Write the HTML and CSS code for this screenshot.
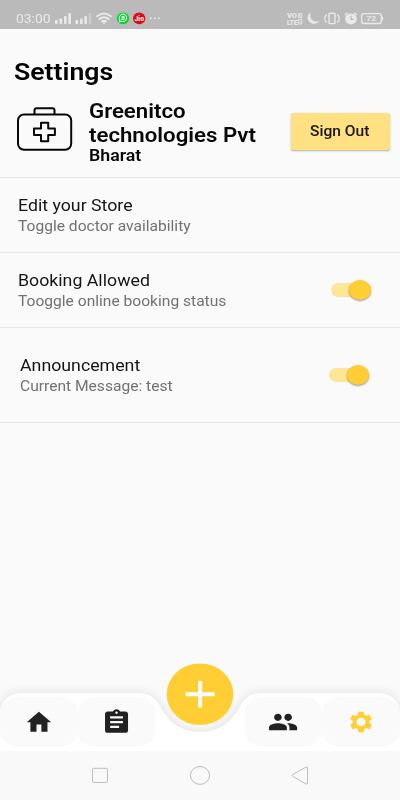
FILE: index.html
```html
<!DOCTYPE html>
<html lang="en">
<head>
<meta charset="utf-8">
<title>Settings</title>
<link rel="stylesheet" href="styles.css">
</head>
<body>
<div class="screen">
  <header class="status">
    <span class="clock wide">03:00</span>
    <svg class="status-left" width="110" height="16" viewBox="54 10 110 16" fill="#e9e9e9">
      <rect x="55" y="20" width="2.6" height="4" rx=".8"/><rect x="59.5" y="18.500" width="2.600" height="5.500" rx=".8"/><rect x="64" y="16" width="2.600" height="8" rx=".8"/><rect x="68.300" y="13" width="2.600" height="11" rx=".8"/>
      <rect x="75.500" y="20" width="2.600" height="4" rx=".8"/><rect x="80" y="18.500" width="2.600" height="5.500" rx=".8"/><rect x="84.300" y="16" width="2.600" height="8" rx=".8"/><rect x="88.700" y="13" width="2.600" height="11" rx=".8" opacity=".4"/>
      <g fill="none" stroke="#e9e9e9" stroke-width="1.900"><path d="M96.300 16.800q7.700-6.500 15.400 0M98.800 19.500q5.200-4.300 10.400 0M101.300 21.900q2.700-2.300 5.400 0"/></g><path d="M102.300 22.300h3.400L104 24.300z"/>
      <ellipse cx="123" cy="18.400" rx="6.200" ry="5.900" fill="#08d62f"/>
      <path d="M119.400 21.600l.5-1.700a3.700 3.700 0 1 1 1.500 1.300z" fill="none" stroke="#fff" stroke-width="1"/>
      <text x="121.300" y="20.300" font-size="5.500" font-weight="700" fill="#fff">B</text>
      <ellipse cx="139.200" cy="18.400" rx="6.200" ry="5.900" fill="#e00b12"/>
      <text x="134.500" y="20.700" font-size="6.500" font-weight="700" fill="#fff" textLength="9.500" lengthAdjust="spacingAndGlyphs">Jio</text>
      <rect x="150" y="17.500" width="1.700" height="1.500"/><rect x="154" y="17.500" width="1.700" height="1.500"/><rect x="158" y="17.500" width="1.700" height="1.500"/>
    </svg>
    <svg class="status-right" width="98" height="16" viewBox="286 10 98 16" fill="#e9e9e9">
      <text x="287" y="17.900" font-size="6.400" font-weight="900" textLength="10" lengthAdjust="spacingAndGlyphs">VO</text>
      <text x="287" y="24.600" font-size="6.400" font-weight="900" textLength="10.500" lengthAdjust="spacingAndGlyphs">LTE</text>
      <path d="M298 13h4.300v5.200H298zM298 19h4.300v5.600H298z" opacity=".8"/>
      <path d="M299.500 14.300h1v2.800M299.200 20.300h2v1.200h-2v1.500h2" fill="none" stroke="#bbb" stroke-width=".7"/>
      <path d="M310.500 12.500a6.300 6.200 0 1 0 8.700 8.600c-6 2-10.500-3-8.700-8.600z"/>
      <g fill="none" stroke="#e9e9e9" stroke-width="1.400"><rect x="329" y="13.300" width="6" height="10.300" rx=".8"/><path d="M326.700 14.500q-4 4 0 8M337.300 14.500q4 4 0 8"/></g>
      <ellipse cx="351" cy="18.900" rx="5.900" ry="5.500"/><path d="M345 15l3-2.300M357 15l-3-2.300" stroke="#e9e9e9" stroke-width="1.400"/><path d="M351 15.800v3.600h2.600" fill="none" stroke="#aaa"/>
      <rect x="361.600" y="13.600" width="19.800" height="9.900" rx="2.500" fill="none" stroke="#e9e9e9" stroke-width="1.400"/><path d="M382 16.700h1.200v3.600H382z"/>
      <text x="366.300" y="21.400" font-size="8" font-weight="700" textLength="10" lengthAdjust="spacingAndGlyphs">72</text>
    </svg>
  </header>
  <main class="content">
    <h1 class="heading"><span class="wide">Settings</span></h1>
    <section class="profile">
      <svg class="kit" width="58" height="46" viewBox="16 106 58 46" fill="none" stroke="#070707" stroke-width="2" stroke-linejoin="round">
        <rect x="18" y="114.500" width="53.200" height="35.300" rx="6"/><path d="M34.500 114v-3.700q0-2 2.200-2h15.600q2.200 0 2.200 2v3.700"/>
        <path d="M41 122.700h7.200v5.700h6.700v6.600h-6.700v6.300H41V135h-7v-6.600h7z"/>
      </svg>
      <div class="who"><span class="name wide">Greenitco</span><span class="name wide">technologies Pvt</span><span class="person wide">Bharat</span></div>
      <button class="signout"><span class="wide">Sign Out</span></button>
    </section>
    <section class="row">
      <div class="copy"><span class="title wide">Edit your Store</span><span class="sub wide">Toggle doctor availability</span></div>
    </section>
    <section class="row">
      <div class="copy"><span class="title wide">Booking Allowed</span><span class="sub wide">Tooggle online booking status</span></div>
      <div class="switch"><i class="thumb"></i></div>
    </section>
    <section class="row tall">
      <div class="copy"><span class="title wide">Announcement</span><span class="sub wide">Current Message: test</span></div>
      <div class="switch"><i class="thumb"></i></div>
    </section>
  </main>
  <nav class="tabs">
    <svg class="tabs-art" width="400" height="111" viewBox="0 640 400 111">
      <defs><filter id="shade" x="-10%" y="-50%" width="120%" height="200%"><feGaussianBlur stdDeviation="6"/></filter></defs>
      <path d="M0 710Q4 693 22 693H138C149 693 155 697 160 706C169 723 182 732 200 732S231 723 240 706C245 697 251 693 262 693H378Q396 693 400 710V752H0z" fill="#000" opacity=".11" filter="url(#shade)"/>
      <path d="M0 710Q4 693 22 693H138C149 693 155 697 160 706C169 723 182 732 200 732S231 723 240 706C245 697 251 693 262 693H378Q396 693 400 710V752H0z" fill="#fff"/>
      <g fill="#fafafa"><rect y="697.300" width="78" height="49.300" rx="18" ry="16"/><rect x="77.500" y="697.300" width="78" height="49.300" rx="18" ry="16"/><rect x="244.500" y="697.300" width="78" height="49.300" rx="18" ry="16"/><rect x="322" y="697.300" width="78" height="49.300" rx="18" ry="16"/></g>
      <ellipse cx="200" cy="694.300" rx="33.400" ry="30.800" fill="#ffce34"/>
      <path d="M185.700 694.200h29M200.200 681v26.400" stroke="#fff" stroke-width="4"/>
      <g fill="#212121">
        <path transform="translate(24.300 708.100) scale(1.220 1.180)" d="M10 20v-6h4v6h5v-8h3L12 3 2 12h3v8z"/>
        <path transform="translate(101.200 708) scale(1.278 1.180)" d="M19 3h-4.180C14.400 1.840 13.300 1 12 1c-1.300 0-2.400.84-2.820 2H5c-1.100 0-2 .9-2 2v14c0 1.100.9 2 2 2h14c1.100 0 2-.9 2-2V5c0-1.100-.9-2-2-2zm-7 0c.55 0 1 .45 1 1s-.45 1-1 1-1-.45-1-1 .45-1 1-1zm2 14H7v-2h7v2zm3-4H7v-2h10v2zm0-4H7V7h10v2z"/>
        <path transform="translate(267.700 707.900) scale(1.278 1.180)" d="M16 11c1.660 0 2.990-1.340 2.990-3S17.660 5 16 5c-1.660 0-3 1.340-3 3s1.340 3 3 3zm-8 0c1.660 0 2.990-1.340 2.990-3S9.660 5 8 5C6.340 5 5 6.340 5 8s1.340 3 3 3zm0 2c-2.330 0-7 1.170-7 3.500V19h14v-2.500c0-2.330-4.670-3.500-7-3.500zm8 0c-.29 0-.62.02-.97.05 1.160.84 1.970 1.970 1.970 3.450V19h6v-2.500c0-2.330-4.670-3.500-7-3.500z"/>
      </g>
      <path fill="#ffce34" transform="translate(347.700 709.700) scale(1.111 1.026)" d="M19.430 12.980c.04-.32.070-.64.070-.98s-.03-.66-.07-.98l2.110-1.650c.19-.15.24-.42.12-.64l-2-3.460c-.12-.22-.39-.3-.61-.22l-2.490 1c-.52-.4-1.080-.73-1.690-.98l-.38-2.650C14.460 2.180 14.250 2 14 2h-4c-.25 0-.46.18-.49.42l-.38 2.650c-.61.25-1.170.59-1.690.98l-2.490-1c-.23-.09-.49 0-.61.22l-2 3.460c-.13.22-.07.49.12.64l2.110 1.650c-.04.32-.07.65-.07.980s.03.66.07.98l-2.110 1.650c-.19.15-.24.42-.12.64l2 3.460c.12.22.39.3.61.22l2.490-1c.52.4 1.080.73 1.690.98l.38 2.650c.03.24.24.42.49.42h4c.25 0 .46-.18.49-.42l.38-2.650c.61-.25 1.170-.59 1.690-.98l2.490 1c.23.09.49 0 .61-.22l2-3.460c.12-.22.07-.49-.12-.64l-2.110-1.650zM12 16.100c-2.260 0-4.100-1.840-4.100-4.100s1.840-4.100 4.100-4.100 4.100 1.840 4.100 4.100-1.840 4.100-4.100 4.100z"/>
    </svg>
  </nav>
  <footer class="system">
    <svg width="220" height="20" viewBox="90 765 220 20" fill="none" stroke="#bdbdbd" stroke-width="1">
      <rect x="92.500" y="768.300" width="15" height="14.200" rx="1.300"/><ellipse cx="200" cy="775.400" rx="9.600" ry="8.900"/><path d="M306 767q1.500-.5 1.500 1v15q0 1.500-1.500 1l-13.500-7.800q-1-.8 0-1.600z"/>
    </svg>
  </footer>
</div>
</body>
</html>
```
FILE: styles.css
```css
* { box-sizing: border-box; }
body { margin: 0; font-family: Roboto, sans-serif; color: #070707; background: #fafafa; }
.screen { width: 400px; height: 800px; display: flex; flex-direction: column; overflow: hidden; background: #fafafa; }
.wide { display: block; width: max-content; white-space: nowrap; transform: scaleX(1.083); transform-origin: left center; }
.status { height: 29px; flex: none; background: #bababa; display: flex; align-items: flex-start; padding: 10px 16px 0; }
.status-left { margin-left: 7px; }
.status-right { margin-left: auto; }
.clock { width: 31px; font-size: 12.800px; line-height: 18px; color: #e9e9e9; }
.content { flex: 1; min-height: 0; }
.heading { margin: 0; padding: 27px 0 0 13.500px; font-size: 24.600px; line-height: 31px; font-weight: 600; color: #000; }
.profile { height: 91px; display: flex; align-items: flex-start; padding: 13px 10px 0 16px; border-bottom: 1px solid #e6e6e6; }
.kit { margin-top: 6px; flex: none; }
.who { margin-left: 15px; font-weight: 600; }
.name { font-size: 20.500px; line-height: 23.500px; }
.person { font-size: 16.400px; line-height: 18px; }
.signout { width: 99px; height: 37px; margin: 13px 0 0 auto; padding: 0 0 0 19px; flex: none; border: 0; border-radius: 2px; background: #ffe082; box-shadow: 0 1px 2px rgba(0,0,0,.3); color: #151515; font: 500 14.400px/38px Roboto, sans-serif; text-align: left; }
.row { height: 75px; padding: 0 29px 0 18px; display: flex; justify-content: space-between; align-items: center; border-bottom: 1px solid #e6e6e6; }
.row.tall { height: 95px; padding: 0 31px 0 20px; }
.copy { padding-top: 2px; }
.title { font-size: 16.400px; line-height: 21px; color: #151515; }
.sub { font-size: 14.400px; line-height: 21px; color: #717171; }
.switch { width: 40px; height: 14px; display: flex; align-items: center; justify-content: flex-end; border-radius: 7px; background: #fee698; }
.thumb { width: 22.500px; height: 20.500px; flex: none; border-radius: 50%; background: #ffce34; box-shadow: 0 1px 2px rgba(0,0,0,.4); }
.tabs { height: 111px; flex: none; }
.tabs-art { display: block; }
.system { height: 49px; flex: none; display: flex; justify-content: center; padding-top: 14px; background: #f9f9f9; }
```
